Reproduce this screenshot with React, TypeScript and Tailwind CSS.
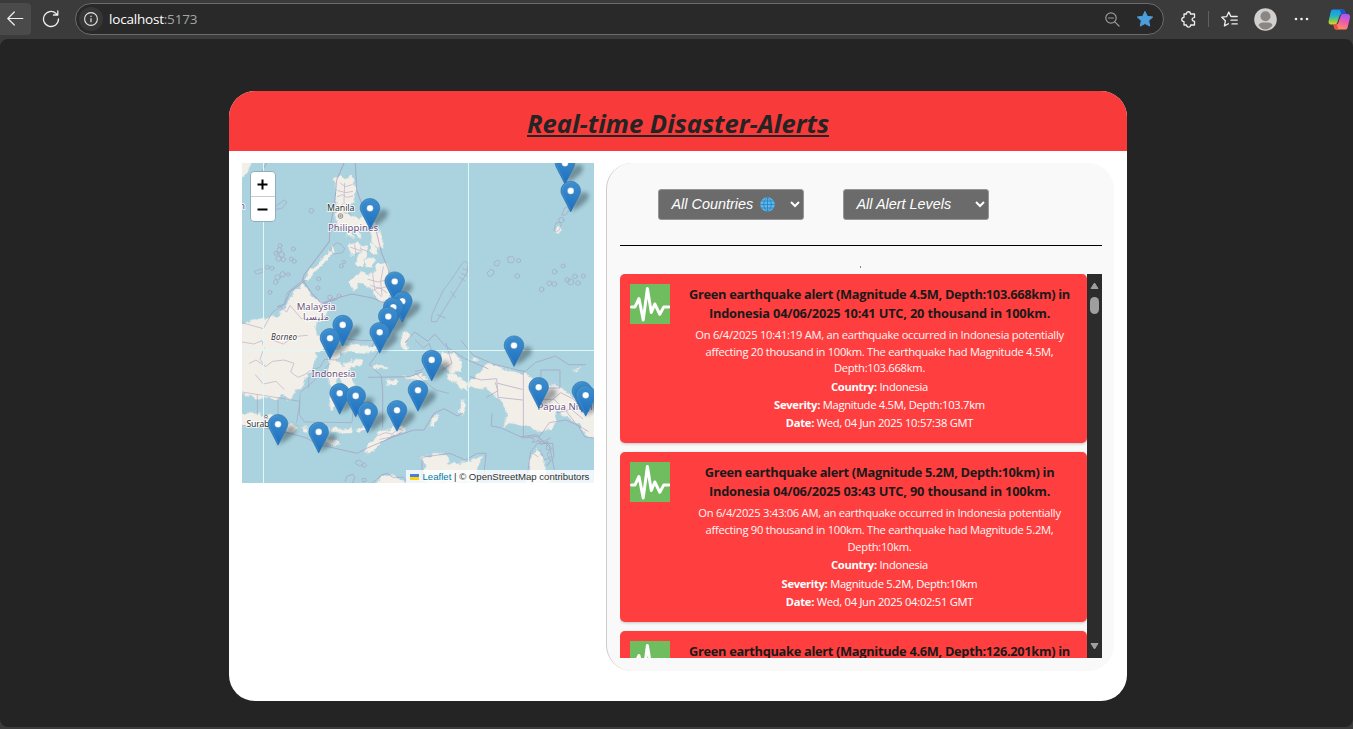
import React from "react";

type Alert = { title: string[]; body: string[]; country: string; severity: string; date: string };

const alerts: Alert[] = [
  {
    title: ["Green earthquake alert (Magnitude 4.5M, Depth:103.668km) in", "Indonesia 04/06/2025 10:41 UTC, 20 thousand in 100km."],
    body: ["On 6/4/2025 10:41:19 AM, an earthquake occurred in Indonesia potentially", "affecting 20 thousand in 100km. The earthquake had Magnitude 4.5M,", "Depth:103.668km."],
    country: "Indonesia",
    severity: "Magnitude 4.5M, Depth:103.7km",
    date: "Wed, 04 Jun 2025 10:57:38 GMT",
  },
  {
    title: ["Green earthquake alert (Magnitude 5.2M, Depth:10km) in", "Indonesia 04/06/2025 03:43 UTC, 90 thousand in 100km."],
    body: ["On 6/4/2025 3:43:06 AM, an earthquake occurred in Indonesia potentially", "affecting 90 thousand in 100km. The earthquake had Magnitude 5.2M,", "Depth:10km."],
    country: "Indonesia",
    severity: "Magnitude 5.2M, Depth:10km",
    date: "Wed, 04 Jun 2025 04:02:51 GMT",
  },
  {
    title: ["Green earthquake alert (Magnitude 4.6M, Depth:126.201km) in"],
    body: [],
    country: "",
    severity: "",
    date: "",
  },
];

// Centre of each pin's white dot, ordered north to south so that southern pins overlap northern ones.
const pins: [number, number][] = [
  [323, 0], [328.7, 27.7], [128, 45], [152.7, 118.3], [160.3, 138], [151.3, 144], [146.3, 153.3], [100.7, 161.7],
  [137.7, 169], [88, 175], [272, 182.3], [189.7, 196.7], [296.7, 224], [176, 227], [340, 228], [97.7, 230],
  [343.7, 232], [113.7, 232.7], [155, 247], [125.7, 248.7], [36, 261], [76.7, 268.7],
];

const islets: [number, number, number][] = [
  [214, 152, 7], [120, 257, 6], [118, 270, 7], [108, 280, 6], [125, 284, 8], [116, 296, 8], [130, 298, 7], [160, 267, 6],
  [154, 297, 6], [163, 304, 6], [96, 325, 6], [82, 322, 6], [128, 343, 8], [113, 352, 8], [107, 366, 7], [145, 343, 5], [90, 397, 6],
  [236, 357, 6], [234, 384, 6], [270, 412, 7], [297, 408, 6], [304, 318, 6], [312, 306, 5],
  [836, 302, 6], [832, 348, 7], [905, 388, 7], [928, 370, 7], [943, 372, 7], [944, 335, 7], [969, 318, 6], [982, 360, 7],
  [992, 366, 9], [1005, 349, 7], [1014, 369, 7], [1030, 348, 6], [964, 180, 8],
];

function Pin({ x, y }: { x: number; y: number }) {
  return (
    <g transform={`translate(${x - 10} ${y - 9.6})`}>
      <path d="M10 0.200C4.500 0.200 0.200 4.500 0.200 9.600c0 2 .6 3.400 1.500 5.100L10 30.800l8.300-16.100c.9-1.700 1.500-3.100 1.500-5.100C19.800 4.500 15.500 .2 10 .2z" fill="url(#pin)" stroke="#2b72ad" strokeWidth=".6" />
      <path d="M10 1.300C5.200 1.300 1.400 5.200 1.400 9.700c0 1.800.5 3.100 1.300 4.600L10 28.500" fill="none" stroke="#72b2de" strokeOpacity=".35" strokeWidth=".8" />
      <circle cx="10" cy="9.800" r="3.300" fill="#fff" stroke="#2772b5" strokeOpacity=".5" strokeWidth=".6" />
    </g>
  );
}

function MapCanvas() {
  return (
    <svg className="block h-[320px] w-[352px]" viewBox="0 0 352 320" fontFamily="'Noto Sans', sans-serif">
      <defs>
        <linearGradient id="pin" x1="0" x2="0" y1="0" y2="1">
          <stop offset="0" stopColor="#3f8fcd" />
          <stop offset="1" stopColor="#1c6fc0" />
        </linearGradient>
        <filter id="soft" x="-20%" y="-20%" width="140%" height="140%">
          <feGaussianBlur stdDeviation="2.200" />
        </filter>
        <filter id="coast" x="0" y="0" width="100%" height="100%">
          <feTurbulence type="fractalNoise" baseFrequency=".14" numOctaves="3" seed="4" />
          <feDisplacementMap in="SourceGraphic" scale="7" xChannelSelector="R" yChannelSelector="G" />
        </filter>
      </defs>
      <rect width="352" height="320" fill="#aad3df" />
      <g filter="url(#coast)">
        <g transform="translate(-2 -3) scale(.33333)" fill="#f2efe9" stroke="#c5dde0" strokeWidth="2" strokeLinejoin="round">
          <path d="M0 4H34l-8 26-10 20-16 10z" />
          {/* Luzon and Bicol */}
          <path d="M286 54l16-10 10 10 18-4 14 8 4 36-10 34-14 12 0 22 18 6 14 6 12-6 12 14 20 6 14 18 4 22-16-4-14-18-18-2-14 8-18-8-16 8-14-14-14 0-8-24 4-30-4-40z" />
          <path d="M312 206l20 4 10 20-18-2zM348 212l14 4 2 20-14-4zM390 206l24 8 14 22 2 30-18-2-14-14z" />
          {/* Visayas */}
          <path d="M326 250l24-4 18 12-10 22-26 4-6-14zM366 256l12 4 8 22-10 26-14 14-18-6 8-20 8-16zM386 244l20 12 8 30-18-10zM378 300l22-12 8 10-18 20-16 4z" />
          {/* Palawan */}
          <path d="M274 256l-12 26-30 28-28 30-10 20 14-2 24-30 32-30 18-26z" />
          {/* Mindanao */}
          <path d="M328 370l18-28 24-8 14 14 20-14 8-24 24 0 12 32 8 36-2 28-14 10-8 14-18-12-16-14-4-18-24-18-18 6-14 20z" />
          {/* Borneo */}
          <path d="M0 494l36-14 34-6 40-8 28-26 10-30 20-22 20-16 22 24 20 26 38 24-12 20-22 8-10 28 10 26 20 16 14 24-34 4-10 40-20 26-12 34-22 16-8 28-40-8-10 12-28-10-36 10-14-14-34 0z" />
          {/* Sulawesi */}
          <path d="M270 606l0-22 14-14 24-14 42-4 34 8 24-12 18-14 8 16-18 20-32 10-42-4-42 4-12 20 24 14 32-16 26 4-8 16-32 6-10 16 24 30 10 38-22-6-20-26-12-28-8 16 0 68-14 20-12-26 8-44-12-20z" />
          {/* Java and the lesser Sunda islands */}
          <path d="M0 764l36-8 28 10 26-4 32 18 14 20-26 6-42-10-34 2-34-4zM136 798l18-4 18 14-22 12-12-12zM188 798l16 2-2 16-14-4zM212 806l36-10 22 10-12 18-38-2zM276 802l60 4-4 12-60-2zM344 806l50-10 2 12-42 8zM262 834l26 4 14 16-22 8-22-16z" />
          <path d="M372 874l22-26 20-28 62-24 22 8-32 24-42 16-24 28-16 8z" />
          {/* Moluccas */}
          <path d="M438 662l24-10 16 10-16 16-20-4zM482 540l18-30 8 18-12 18 14 24-14 6-10-20zM394 618l50 0 0 8-48 2zM492 650l42-6 26 4 0 12-62-4z" />
          {/* New Guinea */}
          <path d="M604 582l34-6 24 18 0 38-30 10-16-18-16-14zM618 642l30 0 30 26 2 24-26-24-20 0zM688 664l32-26 14-22 20-6 52 22 48 6 36 28 62 10 30 20 44 34 36 16 18 26-4 84-42-36-24-36-28-10-30-22-8 10 8 24-20 22-42 8-24-18-60-8-18 18 14-42-14-40-50-40-60-8z" />
          <path d="M670 718l10 16-8 28-16-4 8-24zM580 770l20-8-18 40-12-8zM698 594l24 8-28 2zM998 626l26-2-4 8z" />
          {/* Australia */}
          <path d="M544 970l8-52-4-26 36-10 36 4 6 24 60-4 20-18 22 8-16 30-4 44zM860 970l12-82 18-22 18 30 20 66 6 8zM400 988l24-42 34 0 20 10 26 12 20 22z" />
          <path d="M944 218l8-20 12 4-8 18z" />
        </g>
      </g>
      <g transform="translate(-2 -3) scale(.33333)" strokeLinejoin="round" strokeLinecap="round">
        <g fill="none" stroke="#a58fb6" strokeWidth="2.400" opacity=".58">
          <path d="M80 9L52 58 32 92M346 9L350 90 372 150 408 210 425 280 446 330 458 410 440 432 400 415 336 402 288 415 245 430 215 400 188 360 192 345 268 245 270 205 284 130 290 60 312 9M195 362L150 395 135 432 112 440M240 436L290 418" strokeWidth="3.200" />
          <path d="M302 70l14 10 20-6M294 92l24 6 20-4M292 110l16-6 12 8 18-4M314 70l-2 54M334 140l-22-12-14 14 14 16 20 4M332 262l30 10M344 254l4 30M362 266l20 8M384 358l30 8 26-6M392 376l28 10 26-8M398 340l6 50 20 20M430 320l-8 46 4 40M394 394l24-12 22 16" />
          <path d="M6 488l64 18 28-50 34-22 10-36 54-44M118 438l22 18 10-20 34 40 30 0M6 546l36 6 24-10 6 22-12 34 16 22 22-16 34-4 30 10-10 26 22 16 20-8 20-14 26-8 14-24 34 2M96 540l34 12 32-22 40-4M28 610l20-10 22 16M46 644l24 28 38-8 24 24M6 696l174 28-10 62M52 704l0 60M114 714l0 60M180 704l-2 60 16 22 142 2 6-60M206 684l0-30 32-10M270 610l-50 54-40 34" />
          <path d="M296 534l74 8 46-2M396 560l22-42M418 572l-30 42 36 34 4 44 0 110M386 652l124-2 36-14M496 548l28-32 40 28 20-22 30 34 60 40 70 30M6 796l70 8 80 18 44 12 30 18 60 14 26 6 36 8 30-16 80-34 60-20 30 0 30-50 30-14 40 22 16-8" strokeWidth="3" />
          <path d="M526 640l60 50 40 10M526 540l24 24 18-14 12 40-34 40-20 4" />
          <path d="M664 542l36 44 60 26 80 20 16 2 30-26 60-20 40 26 50 0M618 550l18 60-30 20M690 650l34 10 46-4 4 56 74 8M774 670l72 18M850 636l0 194M740 712l34-20-8-24M904 630l56 0 0 54-56 0zM884 718l58 0 34 32 34 44 34 20M928 726l34-28 40 20 28 40M952 758l42-10 34 28M756 760l-2 38 30 6 66 30 50-6 28-40 50-8 36 16 20 34 26 4M844 830l46-6 40 40 14 70M546 966l0-74 56-8 28-4 46 20 36-20 26 0-8 84M860 960l12-84 20-26 46 0 4 40-20 26M894 842l30 8 14 20M316 964l4-14 18-8 6 10-8 22-14 4M398 968l28-24 16-4 16 12 32 0 22 28" strokeWidth="2.800" />
          <path d="M574 484l2-20 32-70 24-32 36-54 10-4 6 8-2 24-92 148zM632 394l16 20M592 464l24 10M664 340l18 8M658 352l16 10M670 326l12 6" />
          <path d="M105 140l28-20 8 6-14 18-18 4zM44 334l22-8 4 10-20 6zM276 260l14-12 14 6 10 12-6 12-28 4-6-10zM966 164l8-20 10-4 4 10-10 14zM942 210l6-22 12 0 4 6-6 16-10 6z" />
          <path d="M804 292l12-4 8 10-6 10-12 0zM764 306l10-6 6 6-6 12-10-2zM742 338l10-10 10 4-2 12-12 6zM350 902l10-2 8 10-8 8-12-6zM374 908l6 6-4 8-10-2zM74 768l8 0 2 8-8 2zM368 956l10 0 2 6-10 4z" />
          {islets.map(([x, y, r]) => (
            <circle key={`${x}-${y}`} cx={x} cy={y} r={r} />
          ))}
          <path d="M864 830l20 8-8 10 20-6 8 12 20-10-6 24 12 0-8 16 10 20-12 12M892 834l20 10 20-10M900 870l14 30 20-10M878 880l16 10M416 826l20-8 20 4 20-16 14 6M420 838l30-6 30-12" />
        </g>
      </g>
      <path d="M21.500 0V320M226.500 0V320M0 187.500H352" stroke="#e0f8f8" strokeWidth="1" fill="none" />
      <g stroke="#fff" strokeOpacity=".75" strokeWidth="2" paintOrder="stroke" fill="#70537f" fontSize="9.600">
        <text x="86" y="67.500" textLength="50">Philippines</text>
        <text x="54.700" y="146.500" textLength="39">Malaysia</text>
        <text x="61" y="157" textLength="26" fontSize="9" fontFamily="'DejaVu Sans', sans-serif">مليسيا</text>
        <text x="69.500" y="213.500" textLength="44">Indonesia</text>
        <text x="295.500" y="247" textLength="55">Papua Niugi</text>
        <text x="-3" y="46">n</text>
        <g fill="#333" fontSize="8.800">
          <text x="85" y="48" textLength="27.500">Manila</text>
          <text x="29" y="177" textLength="26" fontStyle="italic" fontSize="8">Borneo</text>
          <text x="4.500" y="263.500" textLength="23">Surab</text>
        </g>
      </g>
      <g fill="none" stroke="#444" strokeWidth=".6">
        <circle cx="98.500" cy="53" r="2.300" fill="#fff" />
        <circle cx="98.500" cy="53" r=".8" />
        <circle cx="24" cy="253.500" r="1.300" fill="#fff" />
      </g>
      <g filter="url(#soft)" fill="#20303a" opacity=".42">
        {pins.map(([x, y]) => (
          <path key={`${x}-${y}`} d={`M${x} ${y + 21}l4-13 8-7 6 2-1 6-8 7z`} />
        ))}
      </g>
      {pins.map(([x, y]) => (
        <Pin key={`${x}-${y}`} x={x} y={y} />
      ))}
    </svg>
  );
}

function DisasterMap() {
  return (
    <div className="relative h-[320px] w-[352px] overflow-hidden">
      <MapCanvas />
      <div className="absolute left-[8px] top-[8px] flex h-[51px] w-[26px] flex-col rounded-[4px] border border-[#8fb0ba] bg-white">
        <button className="flex h-[25px] items-center justify-center border-b border-[#ccc] pr-[2px]">
          <svg width="11" height="11" viewBox="0 0 11 11" stroke="#000" strokeWidth="2"><path d="M0.500 5.500h10M5.500 .5v10" /></svg>
        </button>
        <button className="flex h-[24px] items-center justify-center pr-[2px]">
          <svg width="11" height="11" viewBox="0 0 11 11" stroke="#000" strokeWidth="2"><path d="M.5 5.500h10" /></svg>
        </button>
      </div>
      <div className="absolute bottom-0 right-0 flex h-[13px] w-[188px] items-center whitespace-nowrap bg-white/80 pl-[4px] font-['Liberation_Sans',sans-serif] text-[9.6px] leading-[13px] text-[#333]">
        <svg width="9" height="6" viewBox="0 0 9 6"><path fill="#4c7be1" d="M0 0h9v3H0z" /><path fill="#ffd500" d="M0 3h9v3H0z" /></svg>
        <span className="ml-[3.5px] text-[#0078a8]">Leaflet</span>
        <span className="whitespace-pre"> | © OpenStreetMap contributors</span>
      </div>
    </div>
  );
}

function Toolbar() {
  return (
    <header className="flex h-[39px] shrink-0 items-start pt-[3px] font-['Open_Sans',sans-serif]">
      <button className="flex h-[32px] w-[31px] items-center rounded-r-[4px] bg-[#4a4a4a] pl-[7px]">
        <svg width="17" height="16" viewBox="0 0 17 16" fill="none" stroke="#eee" strokeWidth="1.200" strokeLinecap="round" strokeLinejoin="round"><path d="M.8 7.500h15M7.300 1L.8 7.500l6.500 6.500" /></svg>
      </button>
      <button className="ml-[11px] flex h-[32px] w-[18px] items-center">
        <svg width="18" height="18" viewBox="0 0 18 18" fill="none" stroke="#eee" strokeWidth="1.300" strokeLinecap="round" strokeLinejoin="round"><path d="M16.500 9A7.500 7.500 0 1 1 14 3.400l1.600 1.500M15.800 1v4h-4.300" /></svg>
      </button>
      <div className="ml-[15px] flex h-[32px] w-[1089px] items-center rounded-full border border-[#6c6c6c] bg-[#292929] pl-[3px] pr-[9px]">
        <div className="flex h-[24px] w-[24px] items-center justify-center rounded-full bg-[#373737]">
          <svg width="14" height="14" viewBox="0 0 14 14" fill="none" stroke="#e5e5e5"><circle cx="7" cy="7" r="6.400" strokeWidth="1.100" /><path d="M7 6.200v4M7 3.700v1.300" strokeWidth="1.200" /></svg>
        </div>
        <div className="ml-[6px] whitespace-nowrap text-[13.5px] tracking-[-0.2px] text-white">localhost<span className="text-[#a5a5a5]">:5173</span></div>
        <svg className="ml-auto" width="15" height="15" viewBox="0 0 15 15" fill="none" stroke="#9a9a9a" strokeWidth="1.200" strokeLinecap="round"><circle cx="6" cy="6" r="5.200" /><path d="M9.800 9.800L14 14M3.500 6h5" /></svg>
        <svg className="ml-[16px]" width="18" height="18" viewBox="0 0 18 18" fill="#4c9ddb" stroke="#4c9ddb" strokeLinejoin="round"><path d="M9 1.400l2.300 4.900 5.400.7-4 3.700 1 5.400L9 13.500l-4.700 2.600 1-5.400-4-3.700 5.400-.7z" /></svg>
      </div>
      <div className="flex h-[32px] items-center">
        <svg className="ml-[17px]" width="16" height="17" viewBox="0 0 16 17" fill="none" stroke="#eee" strokeWidth="1.300" strokeLinejoin="round"><path d="M3 3h2.500c-.2-3 4-3 4 0h4v3.500l-1.500.5c-1.300.9-1.100 2.500.3 3l1.200.3V14H9.700c-.3 2.800-4 2.800-4.200 0H3v-3.300c-3-.2-3-4.200 0-4.400z" /></svg>
        <div className="ml-[11px] h-[16px] w-px bg-[#606060]" />
        <svg className="ml-[12px]" width="17" height="17" viewBox="0 0 17 17" fill="none" stroke="#eee" strokeWidth="1.300" strokeLinecap="round" strokeLinejoin="round"><path d="M11 5.500L9.800 5.300 7.800 1.100 5.700 5.600.8 6.200l3.600 3.500-1 5.200 4-2.200M10.500 5.500h5.700M10 9.200h6.200M11 12.900h5.200" /></svg>
        <svg className="ml-[15.5px]" width="23" height="23" viewBox="0 0 23 23"><circle cx="11.500" cy="11.500" r="11.300" fill="#d2d0ce" /><circle cx="11.500" cy="8.300" r="5" fill="#8a8683" /><path d="M4.500 17q1.200-2.500 4-2.500h6q2.800 0 4 2.500c-3.300 6-10.700 6-14 0z" fill="#8a8683" /></svg>
        <svg className="ml-[17px]" width="15" height="4" viewBox="0 0 15 4" fill="#eee"><circle cx="2" cy="2" r="1.300" /><circle cx="7.500" cy="2" r="1.300" /><circle cx="13" cy="2" r="1.300" /></svg>
        <svg className="ml-[19.5px]" width="23" height="21" viewBox="0 0 23 21">
          <defs>
            <linearGradient id="cpa" x1="0" y1="0" x2="0" y2="1"><stop stopColor="#1893f2" /><stop offset=".45" stopColor="#24b5c4" /><stop offset=".75" stopColor="#80ca50" /><stop offset="1" stopColor="#f2ce24" /></linearGradient>
            <linearGradient id="cpb" x1="0.500" y1="0" x2="0.200" y2="1"><stop stopColor="#a957f4" /><stop offset=".45" stopColor="#ef5caa" /><stop offset="1" stopColor="#ff9750" /></linearGradient>
          </defs>
          <path d="M4.800 .5h10.200c1 0 1.600 1 2 2l.8 2.500h-4c-1.400 0-2 1-2.400 2.300L9.400 13c-.5 1.500-1 2.500-2.500 2.500H3C.8 15.500.2 13.600.7 11.800L2.700 3C3 1.500 3.600.5 4.800.5z" fill="url(#cpa)" />
          <path d="M17.700 20.500H8.200c-1.200 0-1.700-1-2-2l-.8-3h2.500c1.500 0 2.200-1 2.600-2.300L12.500 7.500C13 6 13.500 5 15 5h4.500c2.200 0 3 2 2.500 3.800l-2.200 9c-.3 1.500-1 2.700-2.100 2.700z" fill="url(#cpb)" />
          <path d="M11.500.5H15c1 0 1.600 1 2 2l.8 2.500h-4c-1.200 0-1-1.500-1.300-2.600z" fill="#2152cc" />
          <path d="M5.400 15.500h2.500c1.300 0 1.600 2 2 3.200.3 1 .7 1.800 1.700 1.800H8.200c-1.200 0-1.700-1-2-2z" fill="#ef4d3e" />
        </svg>
      </div>
    </header>
  );
}

function Filter({ label, globe }: { label: string; globe?: boolean }) {
  return (
    <button className="flex h-[31px] w-[146px] items-center rounded-[3px] border border-[#969696] bg-[#6b6b6b] pl-[12.5px] pr-[3px] font-['Liberation_Sans',sans-serif] text-[14.4px] italic text-white">
      <span className="whitespace-nowrap">{label}</span>
      {globe && (
        <svg className="ml-[7px]" width="15" height="15" viewBox="0 0 15 15" fill="none" stroke="#2a7fb8" strokeWidth=".8"><circle cx="7.500" cy="7.500" r="7.200" fill="#5ab9ef" stroke="none" /><path d="M7.500.3v14.400M.3 7.500h14.400M1.500 4h12M1.500 11h12M7.500.3C2.500 4 2.500 11 7.500 14.700M7.500.3c5 3.700 5 10.700 0 14.400" /></svg>
      )}
      <svg className="ml-auto" width="10" height="7" viewBox="0 0 10 7" fill="none" stroke="#fff" strokeWidth="2"><path d="M1 1l4 4 4-4" /></svg>
    </button>
  );
}

function QuakeIcon() {
  return (
    <svg className="shrink-0" width="40" height="40" viewBox="0 0 40 40">
      <rect width="40" height="40" fill="#6fbd5f" />
      <path d="M1.500 22.900H5L9 14.500l4.200 21.500L17.400 4.500 21.300 28.500l3.500-8.500 5 10.300 4-7.400h5" fill="none" stroke="#fff" strokeWidth="3" strokeLinejoin="round" strokeLinecap="round" />
    </svg>
  );
}

function Row({ name, value }: { name: string; value: string }) {
  return (
    <div className="h-[18.24px] leading-[18.24px] tracking-[-0.28px]">
      <b className="font-bold tracking-[-0.3px]">{name}:</b> {value}
    </div>
  );
}

function AlertCard({ alert }: { alert: Alert }) {
  return (
    <article className="flex h-[169.4px] shrink-0 gap-[12px] rounded-[5px] bg-[#ff3f3f] p-[10px] shadow-[0_1px_3px_rgba(0,0,0,0.22)]">
      <QuakeIcon />
      <div className="flex-1 whitespace-nowrap text-center text-[11.2px] text-white">
        <h3 className="pt-[0.8px] text-[12.8px] font-bold leading-[19.2px] tracking-[-0.3px] text-[#1a1a1a] [&>div:nth-child(2)]:tracking-[-0.18px]">
          {alert.title.map((line) => <div key={line}>{line}</div>)}
        </h3>
        <p className="mt-[3.6px] leading-[16.8px] tracking-[-0.27px] text-[#fff6f6]">
          {alert.body.map((line) => <span className="block" key={line}>{line}</span>)}
        </p>
        {alert.country && (
          <div className="mt-[0.6px]">
            <Row name="Country" value={alert.country} />
            <Row name="Severity" value={alert.severity} />
            <Row name="Date" value={alert.date} />
          </div>
        )}
      </div>
    </article>
  );
}

export default function App() {
  return (
    <div className="flex h-[729px] w-[1353px] flex-col overflow-hidden bg-[#3b3b3b]">
      <Toolbar />
      <main className="flex h-[688px] justify-center rounded-[8px] bg-[#242424] pl-[3px] pt-[52px] font-['Open_Sans','Noto_Sans',sans-serif]">
        <div className="h-[610px] w-[898px] overflow-hidden rounded-[26px] bg-white">
          <h1 className="flex h-[60px] items-center justify-center bg-[#f93a3a] pt-[7px] text-[25.6px] font-bold italic tracking-[-0.02px] text-[#242424]">
            <span className="whitespace-nowrap underline decoration-[2px] underline-offset-[2px]">Real-time Disaster-Alerts</span>
          </h1>
          <div className="flex gap-[12px] pl-[13px] pt-[12px]">
            <DisasterMap />
            <section className="flex h-[508px] w-[508px] flex-col rounded-[26px] border-l border-[#ccc] bg-[#f9f9f9] pl-[13px] pr-[12px] pt-[26px]">
              <div className="flex gap-[39px] pl-[38px]">
                <Filter label="All Countries" globe />
                <Filter label="All Alert Levels" />
              </div>
              <hr className="mt-[25px] border-t border-black" />
              <div className="flex h-[28px] items-end justify-center pb-[6px] pr-[2px]"><i className="h-[2px] w-px bg-[#888]" /></div>
              <div className="flex h-[384px] overflow-hidden">
                <div className="flex w-[467px] flex-col gap-[9.1px]">
                  {alerts.map((a) => <AlertCard key={a.title[0]} alert={a} />)}
                </div>
                <div className="flex w-[15px] flex-col items-center bg-[#2c2c2c] py-[8px]">
                  <svg width="9" height="7" viewBox="0 0 9 7" fill="#9f9f9f" stroke="#9f9f9f" strokeLinejoin="round"><path d="M4.500 1L8 6.500H1z" /></svg>
                  <div className="mt-[8px] h-[17px] w-[9px] rounded-full bg-[#9f9f9f]" />
                  <svg className="mt-auto" width="9" height="7" viewBox="0 0 9 7" fill="#9f9f9f" stroke="#9f9f9f" strokeLinejoin="round"><path d="M4.500 6L8 .5H1z" /></svg>
                </div>
              </div>
            </section>
          </div>
        </div>
      </main>
    </div>
  );
}
